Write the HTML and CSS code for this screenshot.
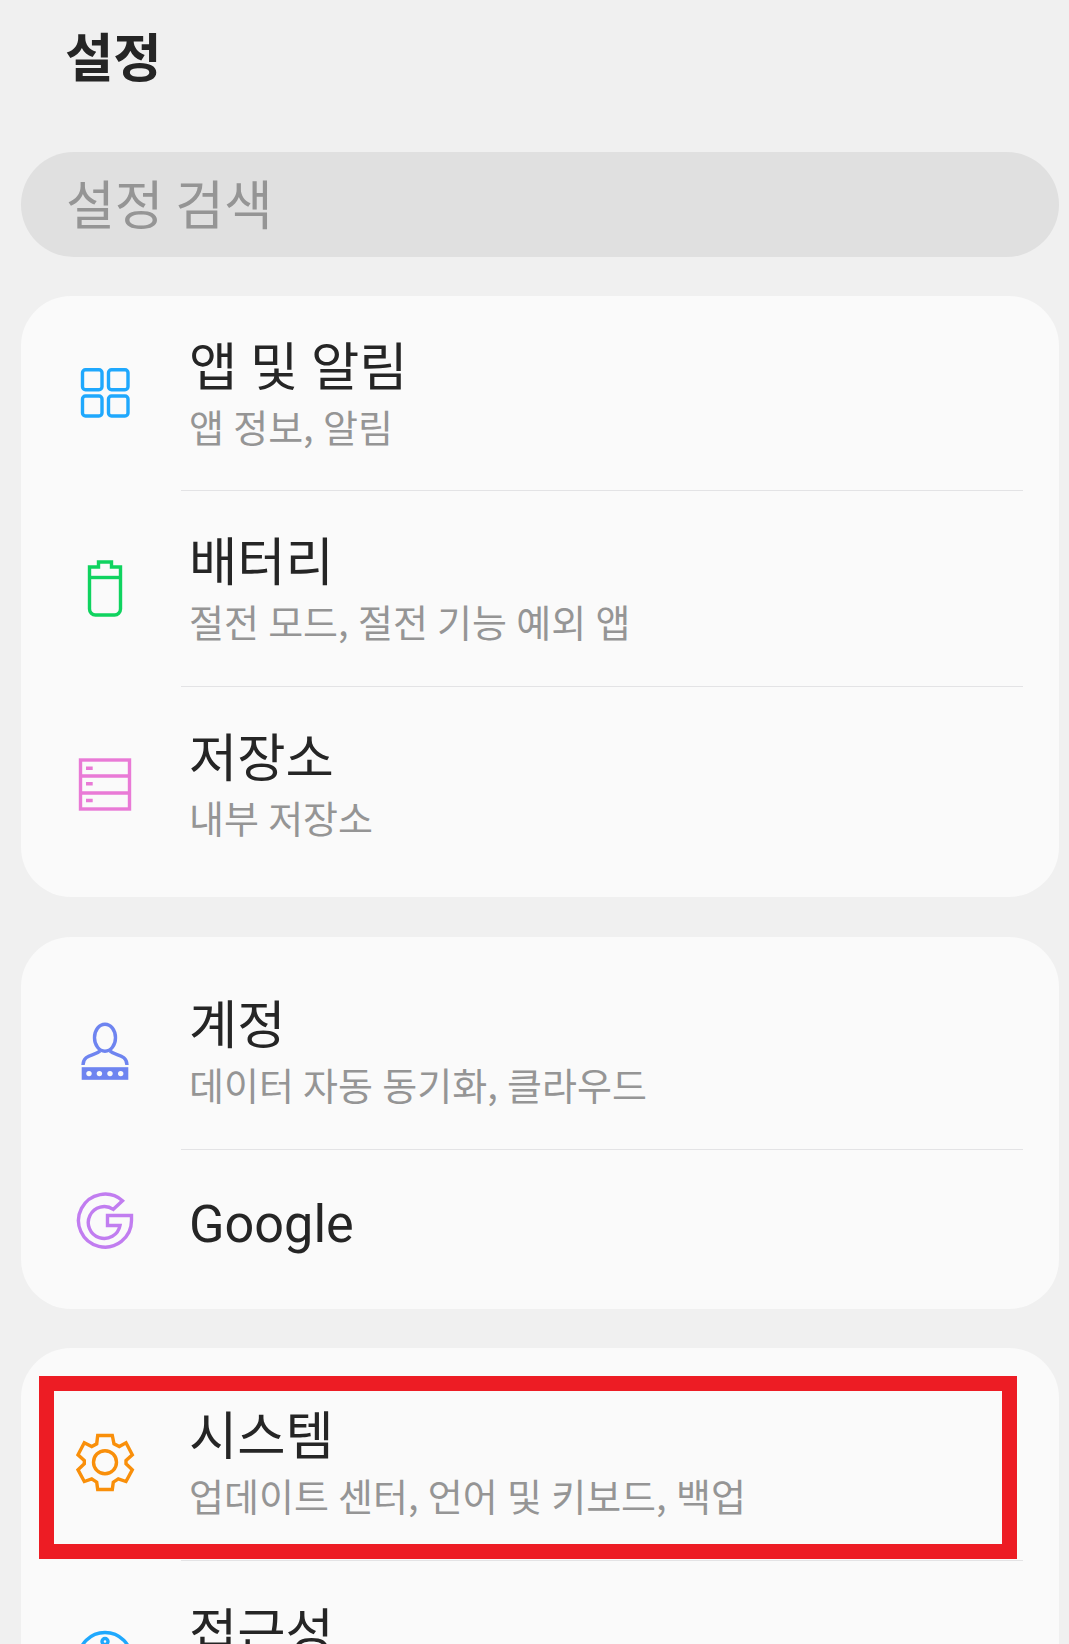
FILE: index.html
```html
<!DOCTYPE html>
<html lang="ko">
<head>
<meta charset="utf-8">
<title>설정</title>
<link rel="stylesheet" href="styles.css">
</head>
<body>
<main class="page">
  <h1 class="title">설정</h1>
  <div class="search">설정 검색</div>

  <section class="card card-first">
    <div class="row">
      <svg class="icon icon-apps" viewBox="0 0 60 60"><rect x="7.5" y="6.7" width="19.5" height="20" rx="3"/><rect x="33.5" y="6.7" width="19.5" height="20" rx="3"/><rect x="7.5" y="33" width="19.5" height="20" rx="3"/><rect x="33.5" y="33" width="19.5" height="20" rx="3"/></svg>
      <div class="text"><div class="name">앱 및 알림</div><div class="sub">앱 정보, 알림</div></div>
    </div>
    <div class="divider"></div>
    <div class="row">
      <svg class="icon icon-battery" viewBox="0 0 60 60"><path d="M23.5 8V3H36.5V8H45.5V50a6 6 0 0 1-6 6H20.5a6 6 0 0 1-6-6V8Z"/><path d="M14.5 18.5H45.5"/></svg>
      <div class="text"><div class="name">배터리</div><div class="sub">절전 모드, 절전 기능 예외 앱</div></div>
    </div>
    <div class="divider"></div>
    <div class="row">
      <svg class="icon icon-storage" viewBox="0 0 60 60"><rect x="5.5" y="5" width="49" height="49"/><path d="M5.5 21H54.5M5.5 38H54.5M11 13.2H17.7M11 28.8H17.7M11 45.5H17.7"/></svg>
      <div class="text"><div class="name">저장소</div><div class="sub">내부 저장소</div></div>
    </div>
  </section>

  <section class="card card-middle">
    <div class="row">
      <svg class="icon icon-account" viewBox="0 0 60 60"><ellipse cx="30" cy="15.7" rx="10.5" ry="13.5"/><path d="M25 29C20 34 8 32 8 43M35 29C40 34 52 32 52 43"/><rect class="fill" x="6.7" y="45.2" width="46.6" height="12.6"/><circle class="dot" cx="14" cy="51.6" r="2.7"/><circle class="dot" cx="24.4" cy="51.6" r="2.7"/><circle class="dot" cx="35" cy="51.6" r="2.7"/><circle class="dot" cx="45.7" cy="51.6" r="2.7"/></svg>
      <div class="text"><div class="name">계정</div><div class="sub">데이터 자동 동기화, 클라우드</div></div>
    </div>
    <div class="divider"></div>
    <div class="row row-single">
      <svg class="icon icon-google" viewBox="0 0 60 60"><path d="M47.5 9.7A26.5 26.5 0 1 0 56.5 29.5V24.5H32.5V34.5H45A16 16 0 1 1 38.3 18.3Z"/></svg>
      <div class="text"><div class="name name-latin">Google</div></div>
    </div>
  </section>

  <section class="card card-last">
    <div class="row">
      <svg class="icon icon-gear" viewBox="0 0 60 60"><path d="M22.7 2.5H37.3L39 10.8 44.3 13.5 51 9.8 57.3 21.8 51 27.5V30.8L57.3 36.8 51 48.5 43.3 45.8 38.3 49.2 37.3 56.5H22.7L21.7 49.2 16.7 45.8 9.3 48.5 3 36.8 9.3 30.8V27.5L3 21.8 9.3 9.8 16.7 13.5 21.7 10.8Z"/><circle cx="30" cy="29.2" r="11.5"/></svg>
      <div class="text"><div class="name">시스템</div><div class="sub">업데이트 센터, 언어 및 키보드, 백업</div></div>
      <div class="highlight"></div>
    </div>
    <div class="divider"></div>
    <div class="row row-clipped">
      <svg class="icon icon-access" viewBox="0 0 60 60"><circle cx="30" cy="30" r="26.5"/><circle cx="30" cy="12.5" r="3"/></svg>
      <div class="text"><div class="name">접근성</div></div>
    </div>
  </section>
</main>
</body>
</html>
```
FILE: styles.css
```css
html, body {
  margin: 0;
  height: 1644px;
  overflow: hidden;
  background: #f0f0f0;
}

.page {
  height: 1644px;
  overflow: hidden;
  padding: 0 10px 0 21px;
  font-family: "Noto Sans CJK KR", "Noto Sans", sans-serif;
  color: #252525;
}

.title {
  margin: 0;
  height: 152px;
  padding: 19px 0 0 44px;
  box-sizing: border-box;
  font-size: 52.5px;
  line-height: 70px;
  font-weight: 700;
}

.search {
  height: 105px;
  margin-bottom: 39px;
  padding-left: 45px;
  border-radius: 52.5px;
  background: #e0e0e0;
  color: #959595;
  font-size: 53px;
  line-height: 100px;
  word-spacing: -3px;
}

.card {
  margin-bottom: 40px;
  padding: 17px 0 16px;
  border-radius: 50px;
  background: #fafafa;
}

.card-first {
  padding: 0 0 15px;
}

.card-first .row:first-child {
  height: 194px;
}

.card-middle {
  padding-bottom: 17px;
  margin-bottom: 39px;
}

.card-last {
  margin-bottom: 0;
}

.row {
  position: relative;
  display: flex;
  align-items: center;
  height: 195px;
  padding-left: 54px;
}

.row-single {
  height: 142px;
}

.icon {
  flex: none;
  width: 60px;
  height: 60px;
  margin-right: 54px;
  fill: none;
  stroke-width: 3.4;
}

.icon-apps { stroke: #1fa8fd; }
.icon-battery { stroke: #0fd35f; }
.icon-storage { stroke: #e97ad6; }
.icon-account { stroke: #6e84f0; }
.icon-google { stroke: #c17df0; }
.icon-gear { stroke: #f98f0a; }
.icon-access { stroke: #1fa8fd; }

.icon-account .fill {
  fill: #6e84f0;
  stroke: none;
}

.icon-account .dot {
  fill: #fafafa;
  stroke: none;
}

.text {
  margin-top: -11px;
}

.row-single .text {
  margin-top: 7px;
}

.row-clipped .text {
  padding-bottom: 49px;
}

.name {
  font-size: 52.5px;
  line-height: 76px;
  white-space: nowrap;
  word-spacing: -2px;
}

.name-latin {
  font-family: Roboto, sans-serif;
  font-size: 52.2px;
}

.sub {
  color: #959595;
  font-size: 38px;
  line-height: 50px;
  white-space: nowrap;
  word-spacing: -1.4px;
}

.divider {
  height: 1px;
  margin: 0 36px 0 160px;
  background: #e3e3e5;
}

.highlight {
  position: absolute;
  top: 11px;
  left: 18px;
  width: 948px;
  height: 153px;
  border: 15px solid #ed1c24;
}
```
